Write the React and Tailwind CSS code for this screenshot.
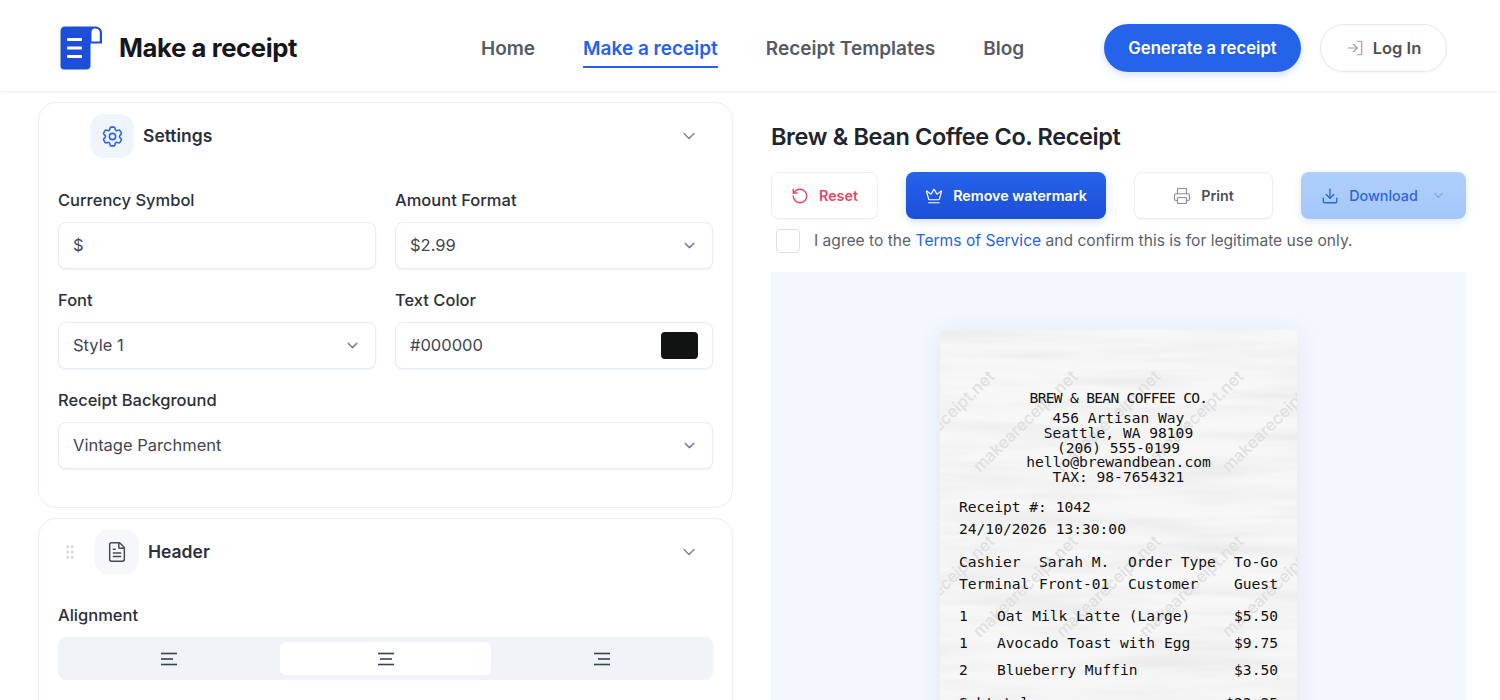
import React from 'react'
import { ChevronDown, Crown, Download, FileText, GripVertical, LogIn, Printer, RotateCcw } from 'lucide-react'
import { HiOutlineCog6Tooth } from 'react-icons/hi2'

const Logo = () => (
  <svg width="42" height="44" viewBox="0 0 42 44" fill="none">
    <path d="M5 0.5H35C39 0.5 42 3 42 6.5V17.5H30.5V40C30.5 42.2 28.7 43.5 26.5 43.5H4C1.8 43.5 0.5 42.2 0.5 40V5C0.5 2.5 2.5 0.5 5 0.5Z" fill="#1d4ed8" />
    <path d="M31.5 15.5V6C31.5 3.6 33 2.4 35 2.4C37.8 2.4 39.8 4 39.8 6.5V15.5Z" fill="white" />
    <rect x="7" y="12" width="15" height="3" rx="1" fill="white" />
    <rect x="7" y="20.5" width="15" height="3" rx="1" fill="white" />
    <rect x="7" y="29" width="15" height="3" rx="1" fill="white" />
  </svg>
)

const AlignIcon = ({ mid }) => (
  <svg width="18" height="14" viewBox="0 0 18 14" stroke="#374151" strokeWidth="1.6">
    <path d="M1 1.5H17" />
    <path d={mid} />
    <path d="M1 12.5H17" />
  </svg>
)

const Field = ({ label, children, className = '' }) => (
  <div className={className}>
    <div className="mb-[11px] h-[22px] text-[16.5px] leading-[22px] font-medium text-[#2b303a]">{label}</div>
    {children}
  </div>
)

const Box = ({ children }) => (
  <div className="flex h-[47px] items-center justify-between rounded-lg border border-[#e8edf5] bg-white pr-[14px] pl-[14px] text-[16.5px] text-[#3f4652] shadow-[0_1px_2px_rgba(30,60,120,0.08)]">
    {children}
  </div>
)

const Select = ({ value }) => (
  <Box>
    <span>{value}</span>
    <ChevronDown size={17} className="text-[#7c828d]" />
  </Box>
)

const marks = []
for (const top of [463, 628, 793]) {
  for (const left of [887, 970, 1053, 1136, 1219]) {
    marks.push({ left: left - 940, top: top - 330 })
  }
}

const Receipt = () => (
  <div className="relative mx-auto h-[600px] w-[357px] overflow-hidden bg-[#f7f7f7] px-[19px] pt-[59px] font-['DejaVu_Sans_Mono',monospace] text-[14.6px] text-[#111] shadow-[0_4px_24px_rgba(60,90,150,0.1)]">
    <svg className="absolute inset-0 h-full w-full" aria-hidden="true">
      <filter id="paper">
        <feTurbulence type="fractalNoise" baseFrequency="0.006 0.07" numOctaves="3" seed="4" />
        <feColorMatrix values="0 0 0 0 0.72  0 0 0 0 0.72  0 0 0 0 0.72  0.9 0 0 0 -0.34" />
      </filter>
      <rect width="100%" height="100%" filter="url(#paper)" />
    </svg>
    {marks.map((m, i) => (
      <div
        key={i}
        className="absolute origin-top-left -rotate-[44deg] font-['Inter',sans-serif] text-[16.5px] leading-none font-medium whitespace-nowrap text-[#e0e0e0]"
        style={{ left: m.left, top: m.top }}
      >
        makeareceipt.net
      </div>
    ))}
    <div className="relative">
      <div className="h-[17px] text-center leading-[17px] tracking-[-0.7px]">BREW &amp; BEAN COFFEE CO.</div>
      <div className="mt-[5px] text-center leading-[14.8px]">
        <div>456 Artisan Way</div>
        <div>Seattle, WA 98109</div>
        <div>(206) 555-0199</div>
        <div>hello@brewandbean.com</div>
        <div>TAX: 98-7654321</div>
      </div>
      <div className="mt-[11px] leading-[22.5px]">
        <div>Receipt #: 1042</div>
        <div>24/10/2026 13:30:00</div>
      </div>
      <div className="mt-[10px] grid grid-cols-[80px_89px_106px_1fr] leading-[22px]">
        <span>Cashier</span>
        <span>Sarah M.</span>
        <span>Order Type</span>
        <span>To-Go</span>
        <span>Terminal</span>
        <span>Front-01</span>
        <span>Customer</span>
        <span>Guest</span>
      </div>
      <div className="mt-[7px] leading-[27px]">
        <div className="grid grid-cols-[38px_1fr_auto]">
          <span>1</span>
          <span>Oat Milk Latte (Large)</span>
          <span>$5.50</span>
        </div>
        <div className="grid grid-cols-[38px_1fr_auto]">
          <span>1</span>
          <span>Avocado Toast with Egg</span>
          <span>$9.75</span>
        </div>
        <div className="grid grid-cols-[38px_1fr_auto]">
          <span>2</span>
          <span>Blueberry Muffin</span>
          <span>$3.50</span>
        </div>
        <div className="mt-[6px] flex justify-between">
          <span>Subtotal</span>
          <span>$22.25</span>
        </div>
      </div>
    </div>
  </div>
)

export default function App() {
  return (
    <div className="h-[700px] w-[1500px] overflow-hidden bg-white font-['Inter',sans-serif]">
      <header className="flex h-[92px] items-center border-b border-[#f1f2f4] pt-[5px] pr-[53px] pl-[60px] shadow-[0_1px_3px_rgba(0,0,0,0.04)]">
        <Logo />
        <span className="ml-[17px] w-[180px] text-[25.7px] font-bold tracking-[-0.4px] whitespace-nowrap text-[#15171c]">Make a receipt</span>
        <nav className="mt-[2px] ml-[182px] flex gap-12 text-[19px] font-semibold text-[#555b66]">
          <a>Home</a>
          <a className="relative text-[#2563eb]">
            Make a receipt
            <span className="absolute inset-x-0 -bottom-[5px] h-[2px] bg-[#2563eb]"></span>
          </a>
          <a>Receipt Templates</a>
          <a>Blog</a>
        </nav>
        <div className="ml-auto flex gap-[19px]">
          <button className="h-12 w-[197px] rounded-full bg-[#2563eb] pt-px text-[16.7px] font-semibold text-white shadow-[0_3px_8px_rgba(37,99,235,0.2)]">
            Generate a receipt
          </button>
          <button className="flex h-12 w-[127px] items-center justify-center gap-[9px] rounded-full border border-[#e8e9eb] bg-white text-[16.5px] font-semibold text-[#4b505a] shadow-[0_1px_3px_rgba(0,0,0,0.05)]">
            <LogIn size={18} strokeWidth={1.5} className="text-[#9a9ea6]" />
            Log In
          </button>
        </div>
      </header>

      <main className="flex gap-[38px] pt-[10px] pl-[38px]">
        <div className="flex w-[695px] shrink-0 flex-col gap-[10px]">
          <section className="h-[406px] rounded-[18px] border border-[#e6ecf5] px-[19px] pt-[11px]">
            <div className="flex h-11 items-center">
              <div className="ml-[32px] flex h-11 w-11 items-center justify-center rounded-[14px] bg-[#eff5fe]">
                <HiOutlineCog6Tooth size={25} className="text-[#2563eb]" />
              </div>
              <span className="ml-[9px] text-[17.5px] font-semibold text-[#2b303a]">Settings</span>
              <ChevronDown size={20} strokeWidth={1.6} className="mr-[14px] ml-auto text-[#7c828d]" />
            </div>
            <div className="mt-[31px] grid grid-cols-2 gap-x-[19px] gap-y-5">
              <Field label="Currency Symbol">
                <Box>$</Box>
              </Field>
              <Field label="Amount Format">
                <Select value="$2.99" />
              </Field>
              <Field label="Font">
                <Select value="Style 1" />
              </Field>
              <Field label="Text Color">
                <Box>
                  #000000
                  <span className="h-[27px] w-[37px] rounded bg-[#111312]"></span>
                </Box>
              </Field>
              <Field label="Receipt Background" className="col-span-2">
                <Select value="Vintage Parchment" />
              </Field>
            </div>
          </section>

          <section className="h-[300px] rounded-[18px] border border-[#e6ecf5] px-[19px] pt-[11px]">
            <div className="flex h-11 items-center">
              <GripVertical size={18} className="ml-[3px] text-[#d5d8dd]" />
              <div className="ml-4 flex h-11 w-11 items-center justify-center rounded-[14px] bg-[#f5f7fa]">
                <FileText size={22} strokeWidth={1.6} className="text-[#434852]" />
              </div>
              <span className="ml-[9px] text-[17.5px] font-semibold text-[#2b303a]">Header</span>
              <ChevronDown size={20} strokeWidth={1.6} className="mr-[14px] ml-auto text-[#7c828d]" />
            </div>
            <div className="mt-[30px] mb-[11px] text-[16.5px] leading-[22px] font-medium text-[#2b303a]">Alignment</div>
            <div className="grid h-[43px] grid-cols-[222px_211px_1fr] items-center rounded-lg bg-[#f0f3f8]">
              <div className="flex justify-center">
                <AlignIcon mid="M1 7H13" />
              </div>
              <div className="flex h-[33px] items-center justify-center rounded-md bg-white">
                <AlignIcon mid="M3 7H15" />
              </div>
              <div className="flex justify-center">
                <AlignIcon mid="M5 7H17" />
              </div>
            </div>
          </section>
        </div>

        <div className="w-[695px] shrink-0">
          <h1 className="mt-[18px] h-[34px] text-[23.5px] leading-[34px] font-semibold tracking-[-0.37px] text-[#20242c]">
            Brew &amp; Bean Coffee Co. Receipt
          </h1>
          <div className="mt-[18px] flex justify-between text-[14.3px] font-semibold">
            <button className="flex h-[47px] w-[107px] items-center justify-center gap-[10px] rounded-lg border border-[#eeeff2] bg-white text-[#f0455f] shadow-[0_1px_2px_rgba(0,0,0,0.04)]">
              <RotateCcw size={18} strokeWidth={1.8} />
              Reset
            </button>
            <button className="flex h-[47px] w-[200px] items-center justify-center gap-[10px] rounded-lg bg-gradient-to-b from-[#2563eb] to-[#1d4ed8] text-white shadow-[0_3px_8px_rgba(37,99,235,0.2)]">
              <Crown size={18} strokeWidth={1.6} />
              Remove watermark
            </button>
            <button className="flex h-[47px] w-[139px] items-center justify-center gap-[10px] rounded-lg border border-[#eeeff2] bg-white text-[#4b505a] shadow-[0_1px_2px_rgba(0,0,0,0.04)]">
              <Printer size={18} strokeWidth={1.6} className="text-[#8b9099]" />
              Print
            </button>
            <button className="flex h-[47px] w-[165px] items-center justify-center gap-[10px] rounded-lg bg-gradient-to-b from-[#b0cffc] to-[#a3c6fb] font-medium text-[#2f62e0] shadow-[0_3px_8px_rgba(37,99,235,0.15)]">
              <Download size={18} strokeWidth={1.8} />
              Download
              <ChevronDown size={15} className="ml-[3px] text-[#7a9ff0]" />
            </button>
          </div>
          <div className="mt-[10px] ml-[5px] flex h-6 items-center gap-[14px] text-[15.6px] text-[#5c626d]">
            <span className="h-6 w-6 rounded border border-[#dcdfe4] bg-white"></span>
            <p>
              I agree to the <a className="text-[#2563eb]">Terms of Service</a> and confirm this is for legitimate use only.
            </p>
          </div>
          <div className="mt-[19px] h-[430px] bg-[#f3f7fe] pt-[58px]">
            <Receipt />
          </div>
        </div>
      </main>
    </div>
  )
}
